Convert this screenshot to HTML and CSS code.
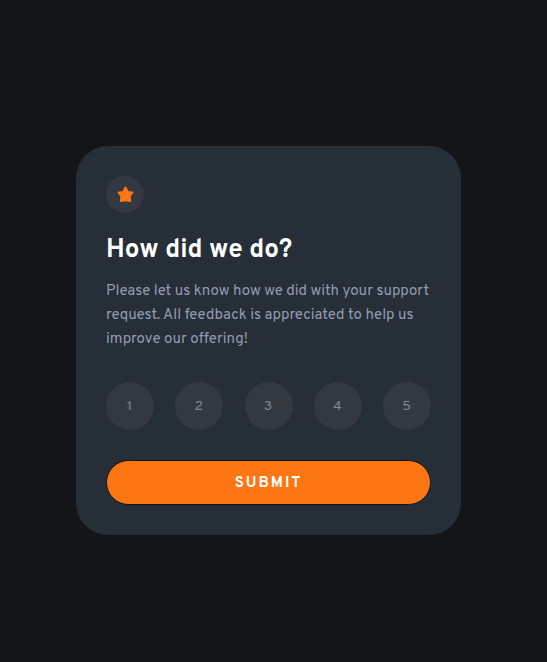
FILE: index.html
```html
<!DOCTYPE html>
<html lang="en">
<head>
<meta charset="utf-8">
<meta name="viewport" content="width=device-width, initial-scale=1">
<title>Interactive rating</title>
<link rel="stylesheet" href="styles.css">
</head>
<body>
<main class="card">
  <div class="badge">
    <svg class="star" viewBox="0 0 17 17" aria-hidden="true"><path d="M8.500 1.500 10.700 6 15.500 6.500 12.600 10.200 13.200 15 8.500 14.300 3.800 15 4.400 10.200 1.500 6.500 6.300 6Z" fill="currentColor" stroke="currentColor" stroke-width="2" stroke-linejoin="round"/></svg>
  </div>
  <h1 class="title">How did we do?</h1>
  <p class="text">Please let us know how we did with your support request. All feedback is appreciated to help us improve our offering!</p>
  <div class="ratings" role="group" aria-label="Rating">
    <button class="rating" type="button">1</button>
    <button class="rating" type="button">2</button>
    <button class="rating" type="button">3</button>
    <button class="rating" type="button">4</button>
    <button class="rating" type="button">5</button>
  </div>
  <button class="submit" type="button">SUBMIT</button>
</main>
</body>
</html>
```
FILE: styles.css
```css
* {
  box-sizing: border-box;
}

body {
  min-height: 100vh;
  margin: 0;
  padding: 19px 10px 0 0;
  display: flex;
  align-items: center;
  justify-content: center;
  background: #131518;
  font-family: Overpass, Roboto, sans-serif;
}

.card {
  width: 100%;
  max-width: 385px;
  padding: 30px;
  border-radius: 32px;
  background: #262e37;
}

.badge {
  width: 38px;
  height: 37px;
  display: flex;
  align-items: center;
  justify-content: center;
  border-radius: 50%;
  background: #343841;
  color: #fc7614;
}

.star {
  width: 17px;
  height: 17px;
}

.title {
  margin: 22px 0 13px;
  color: #fff;
  font-size: 26px;
  font-weight: 700;
  line-height: 32px;
}

.text {
  margin: 0 0 30px;
  color: #929cb0;
  font-size: 15px;
  line-height: 24px;
}

.ratings {
  display: flex;
  justify-content: space-between;
  margin-bottom: 30px;
}

.rating {
  width: 48px;
  height: 48px;
  padding: 1px 1px 0 0;
  border: 0;
  border-radius: 50%;
  background: #343841;
  color: #7c8798;
  font: inherit;
  font-size: 14px;
}

.submit {
  display: block;
  width: 100%;
  height: 45px;
  padding: 2px 0 0;
  border: 1px solid #131518;
  border-radius: 23px;
  background: #fc7614;
  color: #fff;
  font: inherit;
  font-size: 15px;
  font-weight: 700;
  letter-spacing: 2px;
}
```
